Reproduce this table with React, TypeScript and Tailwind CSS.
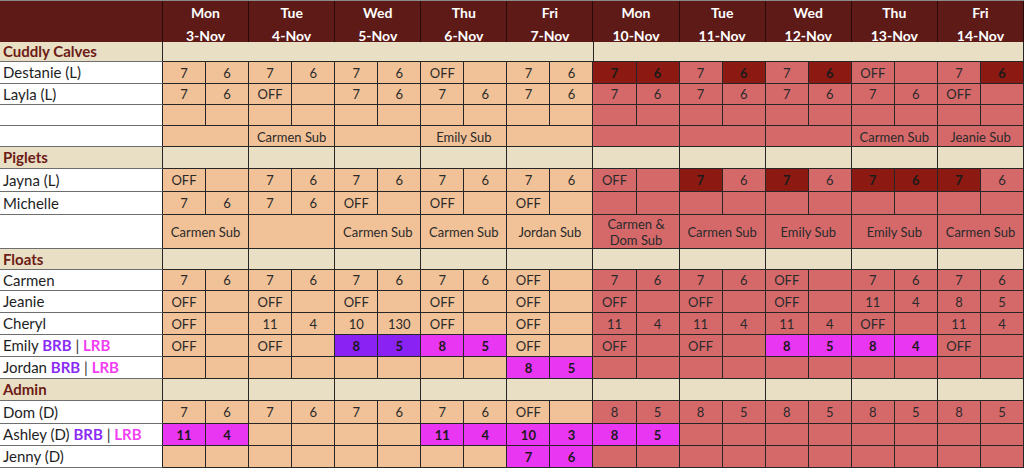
import React from "react";

type Tone = "" | "dark" | "purple" | "magenta";

const days = [
  ["Mon", "3-Nov"],
  ["Tue", "4-Nov"],
  ["Wed", "5-Nov"],
  ["Thu", "6-Nov"],
  ["Fri", "7-Nov"],
  ["Mon", "10-Nov"],
  ["Tue", "11-Nov"],
  ["Wed", "12-Nov"],
  ["Thu", "13-Nov"],
  ["Fri", "14-Nov"],
];

// tokens: "_" empty, "!" dark red, "^" purple, "*" magenta
type Row =
  | { kind: "section"; label: string; h: string; perDay: boolean }
  | { kind: "shift"; name: React.ReactNode; h: string; cells: string }
  | { kind: "sub"; h: string; subs: string[] };

const rb = (name: string) => (
  <span className="whitespace-pre">
    {name + " "}
    <span className="font-bold text-[#8b2cf5]">BRB</span>
    <span className="text-[#333]">{" | "}</span>
    <span className="font-bold text-[#f23ef2]">LRB</span>
  </span>
);

const rows: Row[] = [
  { kind: "section", label: "Cuddly Calves", h: "h-[20px]", perDay: false },
  { kind: "shift", name: "Destanie (L)", h: "h-[22px]", cells: "7 6 7 6 7 6 OFF _ 7 6 7! 6! 7 6! 7 6! OFF _ 7 6!" },
  { kind: "shift", name: "Layla (L)", h: "h-[21px]", cells: "7 6 OFF _ 7 6 7 6 7 6 7 6 7 6 7 6 7 6 OFF _" },
  { kind: "shift", name: "", h: "h-[21px]", cells: "_ _ _ _ _ _ _ _ _ _ _ _ _ _ _ _ _ _ _ _" },
  { kind: "sub", h: "h-[21px]", subs: ["", "Carmen Sub", "", "Emily Sub", "", "", "", "", "Carmen Sub", "Jeanie Sub"] },
  { kind: "section", label: "Piglets", h: "h-[22px]", perDay: true },
  { kind: "shift", name: "Jayna (L)", h: "h-[23px]", cells: "OFF _ 7 6 7 6 7 6 7 6 OFF _ 7! 6 7! 6 7! 6! 7! 6" },
  { kind: "shift", name: "Michelle", h: "h-[23px]", cells: "7 6 7 6 OFF _ OFF _ OFF _ _ _ _ _ _ _ _ _ _ _" },
  { kind: "sub", h: "h-[34px]", subs: ["Carmen Sub", "", "Carmen Sub", "Carmen Sub", "Jordan Sub", "Carmen &\nDom Sub", "Carmen Sub", "Emily Sub", "Emily Sub", "Carmen Sub"] },
  { kind: "section", label: "Floats", h: "h-[21px]", perDay: true },
  { kind: "shift", name: "Carmen", h: "h-[21px]", cells: "7 6 7 6 7 6 7 6 OFF _ 7 6 7 6 OFF _ 7 6 7 6" },
  { kind: "shift", name: "Jeanie", h: "h-[22px]", cells: "OFF _ OFF _ OFF _ OFF _ OFF _ OFF _ OFF _ OFF _ 11 4 8 5" },
  { kind: "shift", name: "Cheryl", h: "h-[22px]", cells: "OFF _ 11 4 10 130 OFF _ OFF _ 11 4 11 4 11 4 OFF _ 11 4" },
  { kind: "shift", name: rb("Emily"), h: "h-[22px]", cells: "OFF _ OFF _ 8^ 5^ 8* 5* OFF _ OFF _ OFF _ 8* 5* 8* 4* OFF _" },
  { kind: "shift", name: rb("Jordan"), h: "h-[22px]", cells: "_ _ _ _ _ _ _ _ 8* 5* _ _ _ _ _ _ _ _ _ _" },
  { kind: "section", label: "Admin", h: "h-[22px]", perDay: true },
  { kind: "shift", name: "Dom (D)", h: "h-[23px]", cells: "7 6 7 6 7 6 7 6 OFF _ 8 5 8 5 8 5 8 5 8 5" },
  { kind: "shift", name: rb("Ashley (D)"), h: "h-[22px]", cells: "11* 4* _ _ _ _ 11* 4* 10* 3* 8* 5* _ _ _ _ _ _ _ _" },
  { kind: "shift", name: "Jenny (D)", h: "h-[22px]", cells: "_ _ _ _ _ _ _ _ 7* 6* _ _ _ _ _ _ _ _ _ _" },
];

const grid = "grid grid-cols-[163px_repeat(20,minmax(0,1fr))]";
const line = "border-r border-b border-[#262626]";

function parse(tok: string): { text: string; tone: Tone } {
  let tone: Tone = "";
  let t = tok;
  if (t.endsWith("!")) tone = "dark";
  else if (t.endsWith("^")) tone = "purple";
  else if (t.endsWith("*")) tone = "magenta";
  if (tone) t = t.slice(0, -1);
  if (t === "_") t = "";
  return { text: t, tone };
}

function toneClass(tone: Tone, week2: boolean) {
  if (tone === "dark") return "bg-[#8c1a13] font-bold text-[#1a1a1a]";
  if (tone === "purple") return "bg-[#8a22f3] font-bold text-[#1a1a1a]";
  if (tone === "magenta") return "bg-[#e936f3] font-bold text-[#1a1a1a]";
  return week2 ? "bg-[#d5696a] text-[#2a2a2a]" : "bg-[#f1c197] text-[#2a2a2a]";
}

function NameCell({ children, section }: { children?: React.ReactNode; section?: boolean }) {
  return (
    <div
      className={
        "flex items-center pl-[3px] text-[15px] whitespace-nowrap border-r border-r-[#262626] border-b border-b-[#6e6e6e] " +
        (section ? "bg-[#e8dfc5] font-bold text-[#6c1b15]" : "bg-white text-[#1e1e1e]")
      }
    >
      {children}
    </div>
  );
}

export default function App() {
  return (
    <div className="w-[1024px] h-[470px] bg-white overflow-hidden font-['Lato','Open_Sans',sans-serif] text-[13px] leading-none">
      <div className={grid + " h-[42px] bg-[#5d1a17] border-t border-[#8a8a8a]"}>
        <div className="border-r border-b border-[#2a0a08]" />
        {days.map(([d, n], i) => (
          <div
            key={i}
            className="col-span-2 flex flex-col items-center justify-center gap-[9px] pt-[5px] border-r border-b border-[#2a0a08] text-white font-bold text-[14px]"
          >
            <span>{d}</span>
            <span>{n}</span>
          </div>
        ))}
      </div>

      {rows.map((row, ri) => {
        if (row.kind === "section") {
          return (
            <div key={ri} className={grid + " " + row.h}>
              <NameCell section>{row.label}</NameCell>
              {row.perDay ? (
                days.map((_, i) => (
                  <div key={i} className={"col-span-2 bg-[#e8dfc5] " + line} />
                ))
              ) : (
                <>
                  <div className={"col-span-10 bg-[#e8dfc5] " + line} />
                  <div className={"col-span-10 bg-[#e8dfc5] " + line} />
                </>
              )}
            </div>
          );
        }
        if (row.kind === "sub") {
          return (
            <div key={ri} className={grid + " " + row.h}>
              <NameCell />
              {row.subs.map((s, i) => (
                <div
                  key={i}
                  className={
                    "col-span-2 flex items-center justify-center text-center whitespace-pre-line leading-[16px] text-[13px] pt-[1px] " +
                    toneClass("", i >= 5) +
                    " " +
                    line
                  }
                >
                  {s}
                </div>
              ))}
            </div>
          );
        }
        const cells = row.cells.split(" ").map(parse);
        return (
          <div key={ri} className={grid + " " + row.h}>
            <NameCell>{row.name}</NameCell>
            {cells.map((c, i) => (
              <div
                key={i}
                className={
                  "flex items-center justify-center pt-[1px] " + toneClass(c.tone, i >= 10) + " " + line
                }
              >
                {c.text}
              </div>
            ))}
          </div>
        );
      })}
    </div>
  );
}
